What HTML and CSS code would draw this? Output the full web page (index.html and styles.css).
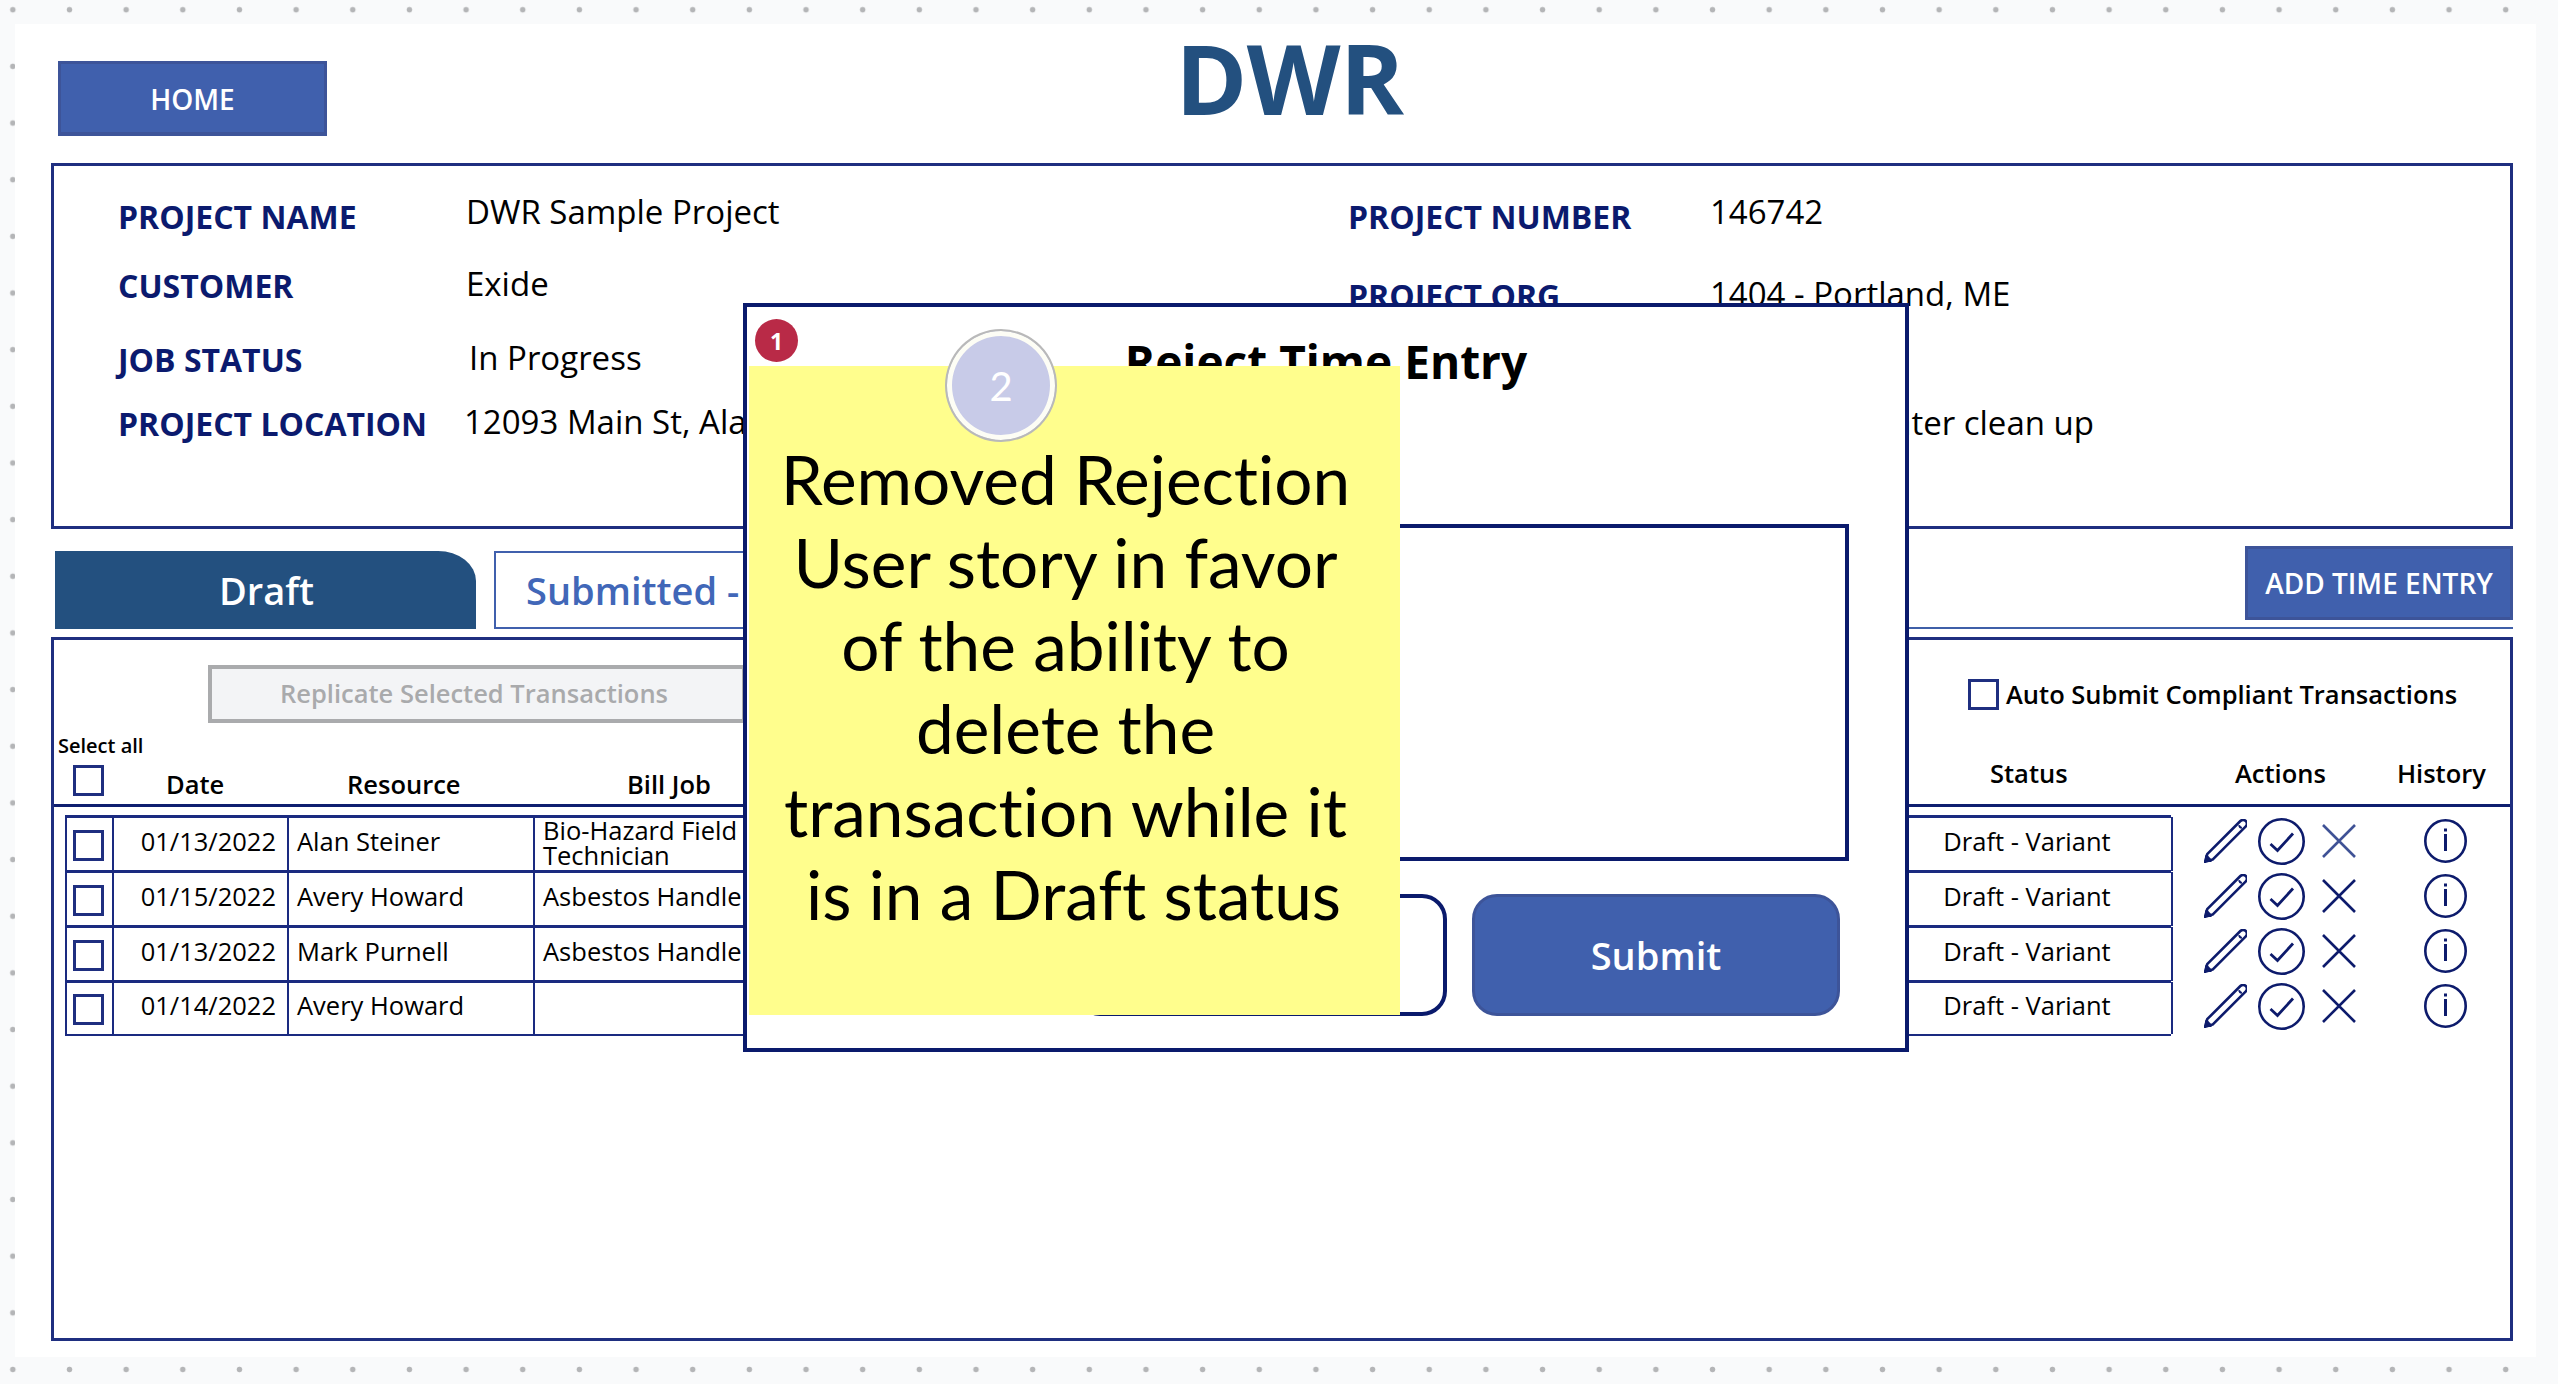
FILE: index.html
```html
<!DOCTYPE html>
<html lang="en">
<head>
<meta charset="utf-8">
<title>DWR</title>
<link rel="stylesheet" href="styles.css">
</head>
<body>
<svg class="defs" width="0" height="0" aria-hidden="true">
  <symbol id="i-pencil" viewBox="0 0 43 44">
    <path d="M36.4 2 3.2 35.2 1 42.8 8.6 40.6 41.8 7.4A3.8 3.8 0 0 0 36.4 2Z" fill="none" stroke="currentColor" stroke-width="2.6" stroke-linejoin="round"/>
    <path d="M35 6.2A3.8 3.8 0 0 0 37.8 9" fill="none" stroke="currentColor" stroke-width="2"/>
    <path d="M1 36.5 1 43 7.500 43 7.500 40.500 3.500 36Z" fill="currentColor"/>
  </symbol>
  <symbol id="i-check" viewBox="0 0 47 47">
    <circle cx="23.5" cy="23.5" r="22.2" fill="none" stroke="currentColor" stroke-width="2.6"/>
    <path d="M12.5 26 19.5 32.5 35 15.5" fill="none" stroke="currentColor" stroke-width="2.8"/>
  </symbol>
  <symbol id="i-x" viewBox="0 0 34 34">
    <path d="M1 1 33 33M33 1 1 33" fill="none" stroke="currentColor" stroke-width="2.6"/>
  </symbol>
  <symbol id="i-info" viewBox="0 0 43 44">
    <ellipse cx="21.5" cy="22" rx="20.2" ry="20.7" fill="none" stroke="currentColor" stroke-width="2.6"/>
    <path d="M21.5 15V32" fill="none" stroke="currentColor" stroke-width="3"/>
    <path d="M21.5 9.500V12.500" fill="none" stroke="currentColor" stroke-width="3"/>
  </symbol>
</svg>

<main class="canvas">
  <header class="top">
    <div class="top-left"><a class="home">HOME</a></div>
    <h1 class="brand">DWR</h1>
    <div></div>
  </header>

  <section class="project">
    <div class="pcol pcol-left">
      <div class="pr pr1"><span class="lbl">PROJECT NAME</span><span class="val val-first">DWR Sample Project</span></div>
      <div class="pr pr2"><span class="lbl">CUSTOMER</span><span class="val">Exide</span></div>
      <div class="pr pr3"><span class="lbl">JOB STATUS</span><span class="val val-in">In Progress</span></div>
      <div class="pr pr4"><span class="lbl">PROJECT LOCATION</span><span class="val val-loc">12093 Main St, Alameda, CA</span></div>
    </div>
    <div class="pcol pcol-right">
      <div class="pr pr1"><span class="lbl lbl-r">PROJECT NUMBER</span><span class="val val-first">146742</span></div>
      <div class="pr pr2b"><span class="lbl lbl-r">PROJECT ORG</span><span class="val">1404 - Portland, ME</span></div>
      <div class="pr pr3b"><span class="lbl lbl-r">PROJECT TYPE</span><span class="val">Remediation</span></div>
      <div class="pr pr4b"><span class="lbl lbl-r">DESCRIPTION</span><span class="val val-desc">Sewerage Water clean up</span></div>
    </div>
  </section>

  <nav class="tabs">
    <div class="tab tab-on">Draft</div>
    <div class="tab tab-off">Submitted - Pending</div>
    <div class="tab-rest"><a class="add">ADD TIME ENTRY</a></div>
  </nav>

  <section class="list">
    <div class="list-head">
      <div class="toolbar">
        <div class="replicate">Replicate Selected Transactions</div>
        <label class="auto"><span class="chk chk-auto"></span><span>Auto Submit Compliant Transactions</span></label>
      </div>
      <div class="select-all">Select all</div>
      <div class="cols">
        <div class="cells-h">
          <span class="chk chk-head"></span>
          <span class="h h-date">Date</span>
          <span class="h h-res">Resource</span>
          <span class="h h-job">Bill Job</span>
          <span class="h"></span>
          <span class="h h-status">Status</span>
        </div>
        <span class="h h-actions">Actions</span>
        <span class="h h-history">History</span>
      </div>
    </div>

    <div class="rows">
      <div class="row">
        <div class="cells">
          <div class="c c-chk"><span class="chk"></span></div>
          <div class="c c-date">01/13/2022</div>
          <div class="c c-text">Alan Steiner</div>
          <div class="c c-job c-two">Bio-Hazard Field Technician</div>
          <div class="c"></div>
          <div class="c c-status">Draft - Variant</div>
        </div>
        <div class="icons">
          <svg class="ic ic-pencil"><use href="#i-pencil"/></svg>
          <svg class="ic ic-check"><use href="#i-check"/></svg>
          <svg class="ic ic-x ic-x-faded"><use href="#i-x"/></svg>
          <svg class="ic ic-info"><use href="#i-info"/></svg>
        </div>
      </div>
      <div class="row">
        <div class="cells">
          <div class="c c-chk"><span class="chk"></span></div>
          <div class="c c-date">01/15/2022</div>
          <div class="c c-text">Avery Howard</div>
          <div class="c c-job">Asbestos Handler</div>
          <div class="c"></div>
          <div class="c c-status">Draft - Variant</div>
        </div>
        <div class="icons">
          <svg class="ic ic-pencil"><use href="#i-pencil"/></svg>
          <svg class="ic ic-check"><use href="#i-check"/></svg>
          <svg class="ic ic-x"><use href="#i-x"/></svg>
          <svg class="ic ic-info"><use href="#i-info"/></svg>
        </div>
      </div>
      <div class="row">
        <div class="cells">
          <div class="c c-chk"><span class="chk"></span></div>
          <div class="c c-date">01/13/2022</div>
          <div class="c c-text">Mark Purnell</div>
          <div class="c c-job">Asbestos Handler</div>
          <div class="c"></div>
          <div class="c c-status">Draft - Variant</div>
        </div>
        <div class="icons">
          <svg class="ic ic-pencil"><use href="#i-pencil"/></svg>
          <svg class="ic ic-check"><use href="#i-check"/></svg>
          <svg class="ic ic-x"><use href="#i-x"/></svg>
          <svg class="ic ic-info"><use href="#i-info"/></svg>
        </div>
      </div>
      <div class="row row-last">
        <div class="cells">
          <div class="c c-chk"><span class="chk"></span></div>
          <div class="c c-date">01/14/2022</div>
          <div class="c c-text">Avery Howard</div>
          <div class="c c-job"></div>
          <div class="c"></div>
          <div class="c c-status">Draft - Variant</div>
        </div>
        <div class="icons">
          <svg class="ic ic-pencil"><use href="#i-pencil"/></svg>
          <svg class="ic ic-check"><use href="#i-check"/></svg>
          <svg class="ic ic-x"><use href="#i-x"/></svg>
          <svg class="ic ic-info"><use href="#i-info"/></svg>
        </div>
      </div>
    </div>
  </section>

  <div class="modal">
    <h2 class="modal-title">Reject Time Entry</h2>
    <div class="reason"></div>
    <div class="modal-btns">
      <div class="mbtn mbtn-cancel">Cancel</div>
      <div class="mbtn mbtn-submit">Submit</div>
    </div>
  </div>

  <aside class="sticky">
    <span class="sl">Removed Rejection</span>
    <span class="sl">User story in favor</span>
    <span class="sl">of the ability to</span>
    <span class="sl">delete the</span>
    <span class="sl">transaction while it</span>
    <span class="sl sl-last">is in a Draft status</span>
  </aside>
  <div class="badge-one">1</div>
  <div class="badge-two">2</div>
</main>
</body>
</html>
```
FILE: styles.css
```css
* { box-sizing: border-box; }
html, body { margin: 0; padding: 0; }
body {
  width: 2558px;
  height: 1384px;
  overflow: hidden;
  background-color: #f9fafb;
  background-image: radial-gradient(circle at center, #b4b5b7 2.4px, rgba(180,181,183,0) 3.2px);
  background-size: 56.67px 56.67px;
  background-position: -15.5px -18.6px;
  font-family: "Open Sans", "Liberation Sans", sans-serif;
  color: #000;
}
.defs { display: block; height: 0; }

.canvas {
  position: relative;
  margin: 0 0 0 15px;
  width: 2521px;
  height: 1333px;
  top: 24px;
  background: #fff;
}

/* header */
.top {
  display: grid;
  grid-template-columns: 1fr auto 1fr;
  height: 139px;
}
.top-left { padding: 37px 0 0 43px; }
.home {
  display: flex;
  align-items: center;
  justify-content: center;
  width: 269px;
  height: 75px;
  background: #4060ad;
  border: 3px solid #3d5499;
  border-bottom-width: 4px;
  color: #fff;
  font-size: 28px;
  font-weight: 600;
  padding-top: 2px;
}
.brand {
  margin: 0;
  padding-left: 28px;
  font-size: 97px;
  line-height: 106px;
  font-weight: 700;
  color: #23507f;
  letter-spacing: -0.5px;
}

/* project card */
.project {
  margin-left: 36px;
  width: 2462px;
  height: 366px;
  border: 3px solid #1f2f80;
  display: grid;
  grid-template-columns: 1230px 1fr;
  padding-left: 64px;
}
.pr { display: flex; align-items: flex-start; white-space: nowrap; }
.lbl {
  width: 348px;
  flex: none;
  color: #0b1a6e;
  font-size: 32px;
  font-weight: 700;
  line-height: 44px;
}
.lbl-r { width: 362px; }
.val { font-size: 33px; line-height: 44px; margin-top: -2px; }
.val-first { margin-top: -5px; }
.val-in { padding-left: 3px; }
.val-loc { margin-left: -2px; }
.val-desc { margin-left: -5px; }
.pr1 { padding-top: 29px; }
.pr2 { padding-top: 25px; }
.pr3 { padding-top: 30px; }
.pr4 { padding-top: 20px; }
.pr2b { padding-top: 35px; }
.pr3b { padding-top: 16px; }
.pr4b { padding-top: 25px; }

/* tabs */
.tabs {
  display: flex;
  align-items: flex-end;
  margin: 16px 0 0 40px;
  width: 2458px;
  height: 84px;
}
.tab {
  height: 78px;
  display: flex;
  align-items: center;
  font-size: 38px;
  font-weight: 600;
  white-space: nowrap;
}
.tab-on {
  width: 421px;
  justify-content: center;
  padding-left: 2px;
  background: #23507f;
  color: #fff;
  border-radius: 0 38px 0 0 / 0 30px 0 0;
}
.tab-off {
  margin-left: 18px;
  width: 420px;
  padding-left: 30px;
  border: 2px solid #4060ad;
  color: #4167b8;
}
.tab-rest {
  flex: 1;
  height: 84px;
  display: flex;
  justify-content: flex-end;
  align-items: flex-start;
  border-bottom: 2px solid #3f5fa8;
}
.add {
  display: flex;
  align-items: center;
  justify-content: center;
  width: 268px;
  height: 74px;
  margin-top: 1px;
  background: #4060ad;
  border: 3px solid #3d5499;
  color: #fff;
  font-size: 28px;
  font-weight: 600;
  white-space: nowrap;
}

/* transactions card */
.list {
  margin: 8px 0 0 36px;
  width: 2462px;
  height: 704px;
  border: 3px solid #1f2f80;
}
.list-head {
  height: 167px;
  padding-top: 25px;
  border-bottom: 3px solid #0f1f70;
}
.toolbar {
  display: flex;
  align-items: center;
  height: 58px;
  padding-left: 154px;
}
.replicate {
  width: 538px;
  height: 58px;
  border: 4px solid #aaabad;
  background: #f3f4f6;
  color: #a9aaac;
  font-size: 25.500px;
  font-weight: 600;
  display: flex;
  align-items: center;
  justify-content: center;
  padding: 0 6px 2px 0;
  white-space: nowrap;
}
.auto {
  margin-left: 1222px;
  display: flex;
  align-items: center;
  gap: 7px;
  font-size: 25.500px;
  font-weight: 600;
  white-space: nowrap;
}
.chk {
  display: block;
  width: 31px;
  height: 31px;
  border: 3px solid #1f2f80;
  background: #fff;
}
.select-all {
  margin: 9px 0 0 4px;
  font-size: 20px;
  font-weight: 600;
  line-height: 28px;
}
.cols {
  display: flex;
  align-items: flex-start;
  margin-top: 3px;
  padding-left: 11px;
}
.cells-h,
.cells {
  display: grid;
  grid-template-columns: 47px 175px 246px 300px 1050px 288px;
  width: 2106px;
  flex: none;
}
.h {
  font-size: 25.500px;
  font-weight: 600;
  line-height: 36px;
  white-space: nowrap;
}
.chk-head { margin: 2px 0 0 8px; }
.h-date { padding: 3px 0 0 54px; height: 41px; }
.h-res { padding: 3px 0 0 60px; height: 41px; }
.h-job { padding: 3px 0 0 94px; height: 41px; }
.h-status { padding: 0 0 0 107px; margin-top: -8px; }
.h-actions { margin: -8px 0 0 64px; }
.h-history { margin: -8px 0 0 71px; }

.rows { padding: 8px 0 0 11px; }
.row { display: flex; align-items: stretch; height: 55px; }
.cells {
  border-top: 2px solid #1a2a80;
  height: 55.500px;
  border-left: 2px solid #1a2a80;
  font-size: 25.500px;
}
.row-last .cells { border-bottom: 2px solid #1a2a80; height: 56px; }
.c {
  display: flex;
  align-items: center;
  min-width: 0;
  white-space: nowrap;
  overflow: hidden;
  border-right: 2px solid #1a2a80;
  border-top: 1px solid #1a2a80;
  padding-bottom: 7px;
}
.c-chk { padding: 2px 0 0 6px; }
.c-date { justify-content: flex-end; padding-right: 11px; }
.c-text { padding-left: 8px; }
.c-job { padding-left: 8px; }
.c-two { white-space: normal; line-height: 25px; padding-bottom: 3px; padding-right: 50px; }
.c-status { justify-content: center; padding-right: 2px; }

.icons {
  display: flex;
  align-items: center;
  color: #0d1b6c;
  padding-left: 33px;
  height: 52px;
}
.ic { display: block; flex: none; }
.ic-pencil { width: 43px; height: 44px; }
.ic-check { width: 47px; height: 47px; margin-left: 11px; }
.ic-x { width: 34px; height: 34px; margin-left: 17px; }
.ic-x-faded { color: #3f5296; }
.ic-info { width: 43px; height: 44px; margin-left: 68px; }

/* modal */
.modal {
  position: absolute;
  left: 728px;
  top: 279px;
  width: 1166px;
  height: 749px;
  background: #fff;
  border: 4px solid #0a1a6c;
}
.modal-title {
  margin: 0;
  text-align: center;
  font-size: 46px;
  font-weight: 700;
  line-height: 60px;
  padding-top: 24px;
  height: 217px;
}
.reason {
  margin-left: 33px;
  width: 1069px;
  height: 337px;
  border: 4px solid #0a1a6c;
}
.modal-btns {
  display: flex;
  gap: 25px;
  margin: 33px 0 0 328px;
}
.mbtn {
  height: 122px;
  border-radius: 25px;
  display: flex;
  align-items: center;
  justify-content: center;
  font-size: 38px;
  font-weight: 600;
}
.mbtn-cancel { width: 372px; border: 4px solid #0a1a6c; color: #0a1a6c; }
.mbtn-submit { width: 368px; background: #4060ad; border: 3px solid #3d5499; color: #fff; }

/* sticky note */
.sticky {
  position: absolute;
  left: 734px;
  top: 342px;
  width: 651px;
  height: 649px;
  background: #fffe8d;
  padding: 71px 18px 0 0;
  font-family: Lato, "Open Sans", sans-serif;
  font-size: 67.500px;
  line-height: 83px;
  text-align: center;
  color: #000;
  font-variant-ligatures: none;
}
.sl { display: block; white-space: nowrap; }
.sl-last { padding-left: 16px; }

.badge-one {
  position: absolute;
  left: 740px;
  top: 295px;
  width: 43px;
  height: 43px;
  border-radius: 50%;
  background: #b92a47;
  color: #fff;
  font-size: 23px;
  font-weight: 700;
  display: flex;
  align-items: center;
  justify-content: center;
}
.badge-two {
  position: absolute;
  left: 930px;
  top: 305px;
  width: 112px;
  height: 113px;
  border-radius: 50%;
  background: #c8cbe8;
  border: 2.5px solid #b9b9b9;
  box-shadow: inset 0 0 0 5px #fdfdf5;
  color: #fff;
  font-family: Lato, "Open Sans", sans-serif;
  font-size: 40px;
  display: flex;
  align-items: center;
  justify-content: center;
}
```
